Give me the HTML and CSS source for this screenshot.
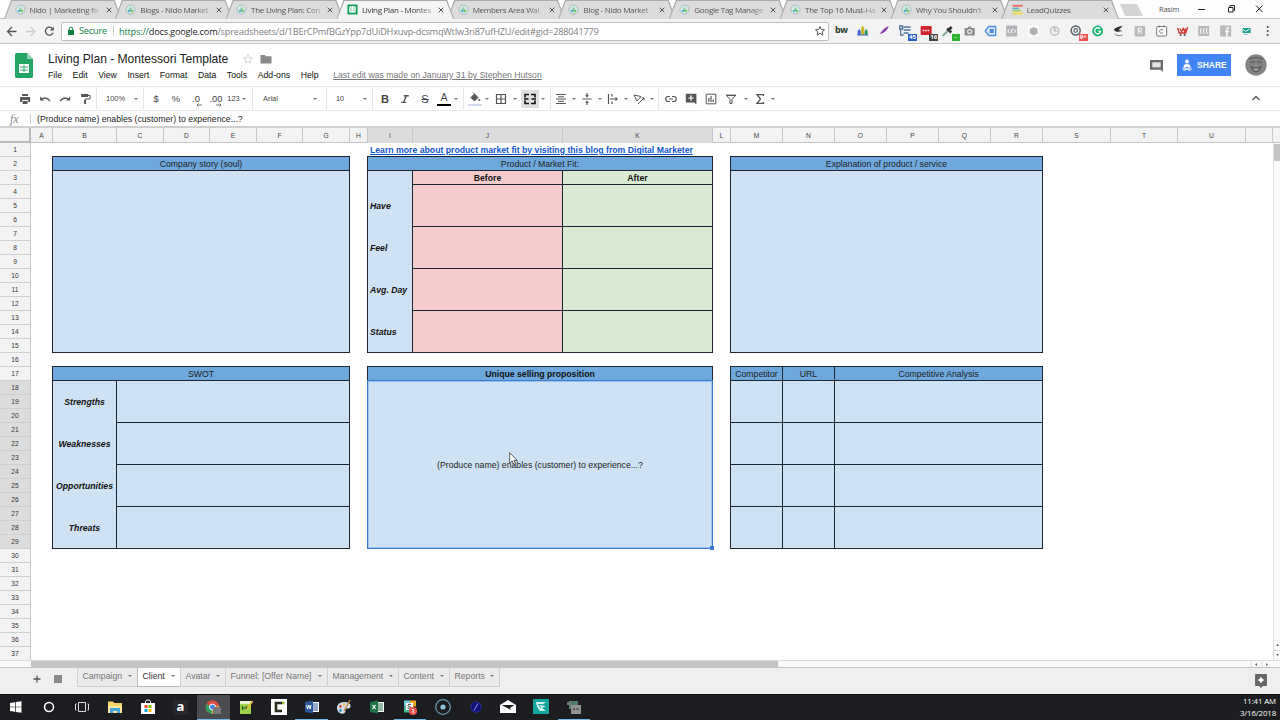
FILE: index.html
```html
<!DOCTYPE html>
<html lang="en">
<head>
    <meta charset="UTF-8">
    <title>Living Plan - Montessori Template</title>
    <link rel="stylesheet" href="styles.css">
</head>
<body>
    <!-- shared symbols -->
    <svg class="defs">
        <symbol id="nido" viewBox="0 0 12 12"><circle cx="6" cy="6" r="5" fill="#d3e8e2" stroke="#a3b8c4" stroke-width="1"/><path d="M3.500 8.500L6 3l2.500 5.500z" fill="#7fc7a0"/><circle cx="4.300" cy="7.500" r="1.300" fill="#4fb3cc"/><circle cx="7.700" cy="7.500" r="1.300" fill="#74c35f"/></symbol>
        <symbol id="x" viewBox="0 0 8 8"><path d="M1.700 1.700l4.600 4.600M6.300 1.700L1.700 6.300" stroke="#555" stroke-width="1"/></symbol>
        <symbol id="arr" viewBox="0 0 4 2"><path d="M0 0h4L2 2z" fill="#777"/></symbol>
    </svg>

    <div class="tabstrip">
        <div class="tab"><svg class="fav"><use href="#nido"/></svg><span>Nido | Marketing fo</span><svg class="close"><use href="#x"/></svg></div>
        <div class="tab"><svg class="fav"><use href="#nido"/></svg><span>Blogs - Nido Market</span><svg class="close"><use href="#x"/></svg></div>
        <div class="tab"><svg class="fav"><use href="#nido"/></svg><span>The Living Plan: Con</span><svg class="close"><use href="#x"/></svg></div>
        <div class="tab current"><svg class="fav" viewBox="0 0 12 12"><rect x=".5" y=".5" width="11" height="11" rx="1" fill="#0f9d58"/><path d="M3 3h6v6H3zM6 3v6" fill="#b7e1cd" stroke="#fff" stroke-width="1"/></svg><span>Living Plan - Montes</span><svg class="close"><use href="#x"/></svg></div>
        <div class="tab"><svg class="fav"><use href="#nido"/></svg><span>Members Area Wal</span><svg class="close"><use href="#x"/></svg></div>
        <div class="tab"><svg class="fav"><use href="#nido"/></svg><span>Blog - Nido Market</span><svg class="close"><use href="#x"/></svg></div>
        <div class="tab"><svg class="fav"><use href="#nido"/></svg><span>Google Tag Manage</span><svg class="close"><use href="#x"/></svg></div>
        <div class="tab"><svg class="fav"><use href="#nido"/></svg><span>The Top 16 Must-Ha</span><svg class="close"><use href="#x"/></svg></div>
        <div class="tab"><svg class="fav"><use href="#nido"/></svg><span>Why You Shouldn't</span><svg class="close"><use href="#x"/></svg></div>
        <div class="tab"><svg class="fav" viewBox="0 0 12 12"><path d="M.5 1h11v2H.5z" fill="#ee6a5f"/><path d="M.5 4h7v1.500h-7z" fill="#5aa7e0"/><path d="M.5 6h9v2h-9z" fill="#8ecf7f"/><path d="M.5 8.500h11v3H.5z" fill="#f1dc63"/></svg><span>LeadQuizzes</span><svg class="close"><use href="#x"/></svg></div>
        <div class="newtab"></div>
        <div class="user">Rasim</div>
        <svg class="winctl" viewBox="0 0 74 19"><g fill="none" stroke="#222" stroke-width="1"><path d="M2 9.500h7"/><path d="M32.500 7.500h4.500v4.500h-4.500zM34 7V5.500h4.500v5H37.500"/><path d="M60 5.500l6.500 6.500M66.500 5.500L60 12"/></g></svg>
    </div>

    <div class="browserbar">
        <svg class="nav" viewBox="0 0 61 24"><g fill="none" stroke-width="1.3"><path d="M16.500 12.500H8M12 8l-4.500 4.500L12 17" stroke="#555"/><path d="M26 12.500h8.500M30.500 8l4.500 4.500-4.500 4.500" stroke="#ccc"/><path d="M52.800 10a4 4 0 1 0 .3 3.800" stroke="#555"/></g><path d="M53.800 7.500v4h-4z" fill="#555"/></svg>
        <div class="url">
            <svg class="lock" viewBox="0 0 8 10"><path d="M1 4h6v5H1z" fill="#0b8043"/><path d="M2.200 4.500V3a1.800 1.800 0 0 1 3.600 0v1.500" fill="none" stroke="#0b8043"/></svg>
            <span class="secure">Secure</span>
            <span class="address"><i>https://</i><b>docs.google.com</b>/spreadsheets/d/1BErCPmfBGzYpp7dUiDHxuvp-dcsmqWtIw3ri87ufHZU/edit#gid=288041779</span>
            <svg class="star" viewBox="0 0 12 12"><path d="M6 1.500l1.300 3 3.200.3-2.400 2.100.7 3.200L6 8.400l-2.800 1.700.7-3.200-2.400-2.100 3.200-.3z" fill="none" stroke="#555"/></svg>
        </div>
        <div class="extensions">
            <span class="bw">bw</span>
            <svg viewBox="0 0 16 16"><path d="M3 12V8l1.500-2L6 8v4z" fill="#3b62c4"/><path d="M6.500 12V5L8 2.500 9.500 5v7z" fill="#c8b52a"/><path d="M10 12V8l1.500-2L13 8v4z" fill="#2d9b4f"/><path d="M2.500 12h11" stroke="#3b62c4"/></svg>
            <svg viewBox="0 0 16 16"><path d="M3 13C5 9 8 5 13 3c-1 4-4 7-9 8z" fill="#8e44ad"/></svg>
            <div class="badged"><svg viewBox="0 0 16 16"><path d="M2 3h3v3H2zM3 6v6h3M6 4h7M6 7h7M6 10h5" stroke="#56749b" stroke-width="1.300" fill="none"/></svg><em class="blue">45</em></div>
            <div class="badged"><svg viewBox="0 0 16 16"><rect x="2" y="3" width="11" height="9" rx="1" fill="#d2232a"/><path d="M4 7.500h7" stroke="#fff" stroke-width="1.500" stroke-dasharray="1.500 1"/></svg><em class="dark">16</em></div>
            <div class="badged"><svg viewBox="0 0 16 16"><path d="M3 13l5-5" stroke="#7fae9a" stroke-width="2"/><path d="M7.500 5.500l4 4M9 7l3-3" stroke="#333" stroke-width="2.600"/></svg><em class="green">-</em></div>
            <svg viewBox="0 0 16 16"><path d="M3 5h3l1-1.500h2L10 5h3v7.500H3z" fill="#888"/><circle cx="8" cy="8.600" r="2.600" fill="#eee"/><circle cx="8" cy="8.600" r="1.300" fill="#888"/></svg>
            <svg viewBox="0 0 16 16"><path d="M6 3.500h7v9H6L2.500 8z" fill="#d8e7fb" stroke="#4a8ae0" stroke-width="1.300"/><path d="M7 6h4v4H7z" fill="#4a8ae0"/></svg>
            <svg viewBox="0 0 16 16"><rect x="2.500" y="2.500" width="11" height="11" fill="#b4b4b8"/><path d="M6 6L4 8l2 2M10 6l2 2-2 2M8.700 5.500l-1.400 5" stroke="#fff" fill="none"/></svg>
            <svg viewBox="0 0 16 16"><rect x="2.500" y="2.500" width="11" height="11" fill="#fff"/><path d="M8 4l4 2v4.500l-4 2-4-2V6z" fill="#b0b0b0"/></svg>
            <svg viewBox="0 0 16 16"><circle cx="8" cy="8" r="4.200" fill="#eee" stroke="#bbb" stroke-width="1.300"/><path d="M8 4v4h2.500" stroke="#aaa" fill="none"/></svg>
            <div class="badged"><svg viewBox="0 0 16 16"><circle cx="8" cy="7.500" r="4.500" fill="none" stroke="#5b6470" stroke-width="1.500"/><circle cx="8" cy="7.500" r="1.800" fill="none" stroke="#5b6470" stroke-width="1.200"/></svg><em class="red">9+</em></div>
            <svg viewBox="0 0 16 16"><circle cx="8" cy="8" r="5.400" fill="#15b371"/><path d="M10.300 5.800a3 3 0 1 0 .7 2.400H8.500" stroke="#fff" stroke-width="1.300" fill="none"/></svg>
            <svg viewBox="0 0 16 16"><path d="M3 7c2-3 6-4 9-4L8 7l4 1-6 1z" fill="#333"/><path d="M4 11c2 2 5 2 8 1" stroke="#777" fill="none"/></svg>
            <svg viewBox="0 0 16 16"><rect x="3" y="3" width="10.500" height="10.500" rx="1" fill="#b8b8b8"/><path d="M6.500 11V5h2a1.500 1.500 0 0 1 0 3h-2M8.500 8l1.500 3" stroke="#fff" fill="none"/></svg>
            <svg viewBox="0 0 16 16"><rect x="3" y="3.500" width="10" height="9.500" rx="1" fill="#fff" stroke="#777"/><path d="M5.500 2.500v2M10.500 2.500v2M9.500 7a2 2 0 1 0 0 2.600" stroke="#777" fill="none"/></svg>
            <svg viewBox="0 0 16 16"><path d="M3 5l1.500 5H11l2-6M5 5.500l2 3 1.500-3 1.500 3 1-3" stroke="#d0342c" stroke-width="1.300" fill="none"/><circle cx="6" cy="12" r="1" fill="#555"/><circle cx="10" cy="12" r="1" fill="#555"/></svg>
            <svg viewBox="0 0 16 16"><rect x="2.500" y="3" width="11" height="10" fill="#b9b9b9"/><path d="M5.500 5q-1.500 3 0 6M8.500 5q-1.500 3 0 6M11.500 5q-1.500 3 0 6" stroke="#fff" fill="none"/></svg>
            <svg viewBox="0 0 16 16"><rect x="2.500" y="2.500" width="11" height="11" fill="#b9b9b9"/><path d="M11.500 5h-1q-1.200 0-1.200 1.200v7M7.500 8.500h4" stroke="#fff" stroke-width="1.500" fill="none"/></svg>
            <svg viewBox="0 0 16 16"><path d="M4 5h8v5H4z" fill="#1f9d8b"/><path d="M4 6l3 2.500L11 6" stroke="#dff" fill="none"/><path d="M5 11.500h4" stroke="#9bd"/></svg>
            <svg viewBox="0 0 16 16"><circle cx="8" cy="4" r="1" fill="#444"/><circle cx="8" cy="8" r="1" fill="#444"/><circle cx="8" cy="12" r="1" fill="#444"/></svg>
        </div>
    </div>

    <div class="dochead">
        <svg class="logo" viewBox="0 0 18 25"><path d="M1.500 0H12l6 6v17.500q0 1.500-1.500 1.500h-15Q0 25 0 23.500v-22Q0 0 1.500 0z" fill="#23a566"/><path d="M12 0l6 6h-6z" fill="#8ed1b1"/><path d="M4 11h10v9H4z" fill="#fff"/><path d="M5 14h8M5 17h8" stroke="#23a566" stroke-width=".9"/><path d="M9 11.800v7.400" stroke="#23a566" stroke-width=".9"/></svg>
        <div class="titles">
            <div class="title"><span>Living Plan - Montessori Template</span>
                <svg class="fstar" viewBox="0 0 12 12"><path d="M6 1.500l1.300 3 3.200.3-2.400 2.100.7 3.200L6 8.400l-2.800 1.700.7-3.200-2.400-2.100 3.200-.3z" fill="none" stroke="#ccc" stroke-width=".8"/></svg>
                <svg class="folder" viewBox="0 0 12 10"><path d="M.5 1h4L6 2.300h5.500V9.500H.5z" fill="#8a8a8a"/></svg>
            </div>
            <div class="menus"><a>File</a><a>Edit</a><a>View</a><a>Insert</a><a>Format</a><a>Data</a><a>Tools</a><a>Add-ons</a><a>Help</a><u>Last edit was made on January 31 by Stephen Hutson</u></div>
        </div>
        <div class="docright">
            <svg class="comment" viewBox="0 0 14 14"><path d="M0 1h14v13l-2.500-2.500H0z" fill="#6b6b6b"/><path d="M2.500 3.500h9v5.500h-9z" fill="#e4e4e4"/></svg>
            <div class="share"><svg viewBox="0 0 10 12"><circle cx="5" cy="2.500" r="2" fill="#fff"/><path d="M1.500 8q0-3 3.500-3t3.500 3z" fill="#fff"/><path d="M2 10h6" stroke="#fff" stroke-width="1"/><rect x=".8" y="8.600" width="3.600" height="2.600" rx="1.300" fill="none" stroke="#fff" stroke-width=".8"/><rect x="5.600" y="8.600" width="3.600" height="2.600" rx="1.300" fill="none" stroke="#fff" stroke-width=".8"/></svg>SHARE</div>
            <svg class="avatar" viewBox="0 0 22 22"><circle cx="11" cy="11" r="10.700" fill="#858585"/><path d="M5 8.500q2.500-1.500 5 0M12 8.500q2.500-1.500 5 0M6 12.500l4 1.500h2l4-1.500-2 4q-3 2.500-6 0zM4 5.500q7-4 14 0" stroke="#555" fill="none" stroke-width="1.100"/><path d="M9 15.500q2 1 4 0" stroke="#bbb" fill="none"/></svg>
        </div>
    </div>

    <div class="toolbar">
        <div class="grp g1">
            <svg viewBox="0 0 12 12"><path d="M3 1h6v2H3zM1 4h10v5H9V7H3v2H1zM3.500 8h5v3h-5z" fill="#555"/></svg>
            <svg viewBox="0 0 12 12"><path d="M1 3.500v4h4z" fill="#555"/><path d="M2.500 6.500q4-3.500 8.500 1.500" fill="none" stroke="#555" stroke-width="1.300"/></svg>
            <svg viewBox="0 0 12 12"><path d="M11 3.500v4H7z" fill="#555"/><path d="M9.500 6.500Q5.500 3 1 8" fill="none" stroke="#555" stroke-width="1.300"/></svg>
            <svg viewBox="0 0 12 12"><path d="M2 1h7v3H2z" fill="#555"/><path d="M9 2.500h2V6H6v2" fill="none" stroke="#555"/><path d="M5 7h2v4H5z" fill="#555"/></svg>
        </div>
        <div class="grp g2"><span>100%</span><svg class="arr"><use href="#arr"/></svg></div>
        <div class="grp g3"><span class="big">$</span><span class="big">%</span><span class="big dec">.0<svg viewBox="0 0 6 4"><path d="M6 2H1M2.500.5L1 2l1.500 1.500" stroke="#555" stroke-width=".8" fill="none"/></svg></span><span class="big dec">.00<svg viewBox="0 0 6 4"><path d="M0 2h5M3.500.5L5 2 3.500 3.500" stroke="#555" stroke-width=".8" fill="none"/></svg></span><span class="num">123</span><svg class="arr"><use href="#arr"/></svg></div>
        <div class="grp g4"><span>Arial</span><svg class="arr"><use href="#arr"/></svg></div>
        <div class="grp g5"><span>10</span><svg class="arr"><use href="#arr"/></svg></div>
        <div class="grp g6"><span class="fmt"><b>B</b></span><svg class="i20" viewBox="0 0 12 12"><path d="M4.500 2h6M1.500 10h6M7.500 2l-3 8" fill="none" stroke="#555" stroke-width="1.700"/></svg><span class="fmt strike">S</span><span class="fmt fcolor">A</span><svg class="arr"><use href="#arr"/></svg></div>
        <div class="grp g7">
            <svg class="i18" viewBox="0 0 14 14"><path d="M3 5.500L6.500 2l3.500 3.500L6.500 9zM5 .5l2 2" fill="#555" stroke="#555"/><circle cx="11.300" cy="8" r="1.100" fill="#555"/><path d="M0 12h14v2H0z" fill="#d3dcef"/></svg><svg class="arr"><use href="#arr"/></svg>
            <svg class="i22" viewBox="0 0 12 12"><path d="M1.500 1.500h9v9h-9zM6 1.500v9M1.500 6h9" fill="none" stroke="#555" stroke-width="1.200"/></svg><svg class="arr"><use href="#arr"/></svg>
            <div class="merge"><svg viewBox="0 0 12 12"><path d="M5 1.500H1v3M7 1.500h4v3M5 10.500H1v-3M7 10.500h4v-3M0 6h4.500M12 6H7.500" fill="none" stroke="#111" stroke-width="1.600"/></svg></div><svg class="arr"><use href="#arr"/></svg>
        </div>
        <div class="grp g8">
            <svg class="i20" viewBox="0 0 12 12"><path d="M1 1.500h10M3 3.800h6M1 6h10M3 8.300h6M1 10.500h10" stroke="#555"/></svg><svg class="arr"><use href="#arr"/></svg>
            <svg class="i20" viewBox="0 0 12 12"><path d="M1.500 6h9M6 0v3M6 12V9" stroke="#555" stroke-width="1.200"/><path d="M4 2.300h4L6 4.500zM4 9.700h4L6 7.500z" fill="#555"/></svg><svg class="arr"><use href="#arr"/></svg>
            <svg class="i20" viewBox="0 0 12 12"><path d="M1.500 1v10M5 1v2.500M5 8.500V11M3 6h6" stroke="#555" stroke-width="1.200"/><path d="M8.500 3.800L11 6 8.500 8.200z" fill="#555"/></svg><svg class="arr"><use href="#arr"/></svg>
            <svg class="i20" viewBox="0 0 12 12"><path d="M1 2l7 1.500L4 8zM5 11l6-6M8.500 5H11v2.500" fill="none" stroke="#555"/></svg><svg class="arr"><use href="#arr"/></svg>
        </div>
        <div class="grp g9">
            <svg class="i20" viewBox="0 0 12 12"><path d="M5 3.500H3.200a2.500 2.500 0 0 0 0 5H5M7 3.500h1.800a2.500 2.500 0 0 1 0 5H7M4 6h4" fill="none" stroke="#555" stroke-width="1.200"/></svg>
            <svg class="i20" viewBox="0 0 12 12"><path d="M.8.800h10.600v10.700L9 9.500H.8z" fill="#555"/><path d="M6 2.300v5.400M3.300 5h5.400" stroke="#fff" stroke-width="1.200"/></svg>
            <svg class="i20" viewBox="0 0 12 12"><path d="M1.200 1.200h9.600v9.600H1.200z" fill="none" stroke="#555"/><path d="M3.800 5v4M6 3v6M8.200 6.500V9" stroke="#555" stroke-width="1.200"/></svg>
            <svg class="i20" viewBox="0 0 12 12"><path d="M1.500 2.500h9L7 6.500v4H5v-4z" fill="none" stroke="#555"/><path d="M1 2.300h10" stroke="#555" stroke-width="1.400"/></svg><svg class="arr wide"><use href="#arr"/></svg>
            <svg class="i20" viewBox="0 0 12 12"><path d="M9.500 3V1.700H3L6.500 6 3 10.300h6.500V9" fill="none" stroke="#555" stroke-width="1.300"/></svg><svg class="arr"><use href="#arr"/></svg>
        </div>
        <svg class="collapse" viewBox="0 0 10 8"><path d="M1.500 6L5 2.500 8.500 6" fill="none" stroke="#555" stroke-width="1.300"/></svg>
    </div>

    <div class="formula"><i>fx</i><span>(Produce name) enables (customer) to experience...?</span></div>

    <div class="main">
        <div class="colheads" id="colheads"><div class="corner"></div></div>
        <div class="body">
            <div class="rowheads" id="rowheads"></div>
            <div class="sheet">
                <a class="cell link">Learn more about product market fit by visiting this blog from Digital Marketer</a>

                <div class="cell head story-h">Company story (soul)</div>
                <div class="cell story"></div>

                <div class="cell head fit-h">Product / Market Fit:</div>
                <div class="cell fit-labels labels left"><span></span><b>Have</b><b>Feel</b><b>Avg. Day</b><b>Status</b></div>
                <div class="cell before pink strong">Before</div>
                <div class="cell after mint strong">After</div>
                <div class="cell before pink have"></div><div class="cell after mint have"></div>
                <div class="cell before pink feel"></div><div class="cell after mint feel"></div>
                <div class="cell before pink day"></div><div class="cell after mint day"></div>
                <div class="cell before pink status"></div><div class="cell after mint status"></div>

                <div class="cell head expl-h">Explanation of product / service</div>
                <div class="cell expl"></div>

                <div class="cell head swot-h">SWOT</div>
                <div class="cell swot-labels labels"><b>Strengths</b><b>Weaknesses</b><b>Opportunities</b><b>Threats</b></div>
                <div class="cell swot r1"></div><div class="cell swot r2"></div><div class="cell swot r3"></div><div class="cell swot r4"></div>

                <div class="cell head usp-h strong">Unique selling proposition</div>
                <div class="cell usp">(Produce name) enables (customer) to experience...?<span class="handle"></span></div>

                <div class="cell head comp">Competitor</div><div class="cell head site">URL</div><div class="cell head analysis">Competitive Analysis</div>
                <div class="cell comp r1"></div><div class="cell site r1"></div><div class="cell analysis r1"></div>
                <div class="cell comp r2"></div><div class="cell site r2"></div><div class="cell analysis r2"></div>
                <div class="cell comp r3"></div><div class="cell site r3"></div><div class="cell analysis r3"></div>
                <div class="cell comp r4"></div><div class="cell site r4"></div><div class="cell analysis r4"></div>
            </div>
            <div class="vscroll"><div class="thumb"></div><svg viewBox="0 0 7 20"><path d="M0 0h7M0 10.500h7" stroke="#ddd"/><path d="M2 6h3L3.500 4zM2 14h3l-1.500 2z" fill="#666"/></svg></div>
        </div>
        <div class="hscroll"><div class="thumb"></div><svg viewBox="0 0 24 7"><path d="M1 0v7M12 0v7" stroke="#ddd"/><path d="M7 2v3L5 3.500zM16 2v3l2-1.500z" fill="#666"/></svg></div>
    </div>

    <div class="sheettabs">
        <svg class="add" viewBox="0 0 8 8"><path d="M4 .5v7M.5 4h7" stroke="#555" stroke-width="1.300"/></svg>
        <span class="all"></span>
        <div class="stab t1">Campaign<svg class="arr"><use href="#arr"/></svg></div>
        <div class="stab t2 on">Client<svg class="arr"><use href="#arr"/></svg></div>
        <div class="stab t3">Avatar<svg class="arr"><use href="#arr"/></svg></div>
        <div class="stab t4">Funnel: [Offer Name]<svg class="arr"><use href="#arr"/></svg></div>
        <div class="stab t5">Management<svg class="arr"><use href="#arr"/></svg></div>
        <div class="stab t6">Content<svg class="arr"><use href="#arr"/></svg></div>
        <div class="stab t7">Reports<svg class="arr"><use href="#arr"/></svg></div>
        <svg class="explore" viewBox="0 0 12 14"><path d="M1 0h10q1 0 1 1v10q0 1-1 1H8l-2 2-2-2H1q-1 0-1-1V1q0-1 1-1z" fill="#666"/><path d="M6 2.500L7.200 4.800 9.500 6 7.200 7.200 6 9.500 4.800 7.200 2.500 6l2.300-1.200z" fill="#fff"/></svg>
    </div>

    <div class="taskbar">
        <div class="app"><svg viewBox="0 0 16 16"><path d="M2 4l5-.8v4.500H2zM7.700 3.100L13.500 2.300v5.400H7.700zM2 8.300h5v4.500L2 12zM7.700 8.300h5.800v5.400l-5.800-.8z" fill="#fff"/></svg></div>
        <div class="app"><svg viewBox="0 0 16 16"><circle cx="8" cy="8" r="4.500" fill="none" stroke="#fff" stroke-width="1.500"/></svg></div>
        <div class="app"><svg viewBox="0 0 16 16"><path d="M4.500 3.500h7v9h-7zM2.500 5h-1v6h1M13.500 5h1v6h-1" fill="none" stroke="#ddd"/></svg></div>
        <div class="app"><svg viewBox="0 0 16 16"><path d="M1 2.500h5l1.500 1.500H15v10H1z" fill="#f5d56b"/><path d="M1 7h14v7H1z" fill="#fbe596"/><path d="M3 9h10v5h-3v-2H6v2H3z" fill="#3fa5dc"/></svg></div>
        <div class="app"><svg viewBox="0 0 16 16"><path d="M5.500 4V2.500q0-1.500 2.500-1.500t2.500 1.500V4" fill="none" stroke="#fff"/><path d="M1 4h14v11H1z" fill="#fff"/><path d="M4.500 6h3v3h-3z" fill="#f25022"/><path d="M8.500 6h3v3h-3z" fill="#7fba00"/><path d="M4.500 10h3v3h-3z" fill="#00a4ef"/><path d="M8.500 10h3v3h-3z" fill="#ffb900"/></svg></div>
        <div class="app"><span class="amazon">a</span></div>
        <div class="app open lit"><svg viewBox="0 0 16 16"><circle cx="7.500" cy="8" r="6.800" fill="#dd4b3e"/><path d="M7.500 8L1.200 5.200A6.800 6.800 0 0 0 7 14.800z" fill="#2aa55a"/><path d="M7.500 8l6.600-1A6.800 6.800 0 0 1 7 14.800z" fill="#f5c32c"/><circle cx="7.500" cy="8" r="3" fill="#4285f4" stroke="#fff"/><rect x="8" y="8" width="8" height="7" fill="#777"/></svg></div>
        <div class="app"><svg viewBox="0 0 16 16"><path d="M2 2h11v13H2z" fill="#9ad34a"/><path d="M2 2h11v3H2z" fill="#e9f3d8"/><path d="M4.500 7v4M4.500 9h4M8.500 7v3" stroke="#1f5a17" stroke-width="1.200"/><path d="M9 10l5.500-8" stroke="#f0b93c" stroke-width="1.800"/></svg></div>
        <div class="app"><svg viewBox="0 0 16 16"><path d="M0 0h16v16H0z" fill="#fff"/><path d="M11 4H5v8h6" fill="none" stroke="#2a2d1c" stroke-width="2.600"/><path d="M11 2.700h2.500v2.600H11z" fill="#8ab92d"/></svg></div>
        <div class="app open"><svg viewBox="0 0 16 16"><path d="M8 3h7v10H8z" fill="#fff"/><path d="M9 5h5M9 7h5M9 9h5M9 11h5" stroke="#2b579a"/><path d="M1 3l8-1.500v13L1 13z" fill="#2b579a"/><path d="M2.500 6l1 4 1.300-4 1.300 4 1-4" fill="none" stroke="#fff"/></svg></div>
        <div class="app"><svg viewBox="0 0 16 16"><path d="M1 9.500Q1 3 8 3t6.500 4.500q0 2-3 2t-2 3q-1 3-4.500 2T1 9.500z" fill="#cfe3ef"/><circle cx="4.500" cy="7.500" r="1.400" fill="#d6483c"/><circle cx="8" cy="5.500" r="1.300" fill="#e8b93a"/><circle cx="4.500" cy="11.500" r="1.400" fill="#3b8cc8"/><path d="M8 12l6-11" stroke="#c9873d" stroke-width="1.500"/></svg></div>
        <div class="app"><svg viewBox="0 0 16 16"><path d="M8 3h7v10H8z" fill="#fff"/><path d="M9 5h5M9 7h5M9 9h5M9 11h5" stroke="#217346"/><path d="M1 3l8-1.500v13L1 13z" fill="#217346"/><path d="M3.500 6l3 4M6.500 6l-3 4" fill="none" stroke="#fff" stroke-width="1.200"/></svg></div>
        <div class="app open"><svg viewBox="0 0 16 16"><path d="M2 1.500h6v6H2z" fill="#6ecadc"/><path d="M8 1.500h6v6H8z" fill="#e9a820"/><path d="M2 7.500h6v6H2z" fill="#3eb991"/><path d="M4 4h7v7H4z" fill="#fff"/><path d="M9 5.500q-3-1-3 .7T8.500 8q0 2-3 1" fill="none" stroke="#444"/><circle cx="11" cy="12" r="4" fill="#ee5653"/><path d="M10 10.800l1.200-.8v4" stroke="#fff" fill="none"/></svg></div>
        <div class="app"><svg viewBox="0 0 16 16"><circle cx="8" cy="8" r="7.300" fill="none" stroke="#6b9fb8" stroke-width="1.200"/><circle cx="8" cy="8" r="2.600" fill="#8fc3dc"/></svg></div>
        <div class="app"><svg viewBox="0 0 16 16"><circle cx="8" cy="8" r="5.200" fill="#101078" stroke="#2b2b9e"/><path d="M10 4.500L6 11.500" stroke="#8ea0e0"/></svg></div>
        <div class="app"><svg viewBox="0 0 16 16"><path d="M0 6l8-5 8 5v8H0z" fill="#fff"/><path d="M1.500 6h13L10 9l1 2-3-1.500z" fill="#1b1d20"/></svg></div>
        <div class="app"><svg viewBox="0 0 16 16"><path d="M0 0h16v15H0z" fill="#12a5a0"/><path d="M3 3h10L8 6.500l5 .5-4 2 4 3H7L4 8z" fill="#d8f3f1"/><path d="M9 5.500H5.500L8 9" stroke="#12a5a0" fill="none"/></svg></div>
        <div class="app open"><svg viewBox="0 0 16 16"><path d="M3 2h9v8H3z" fill="#4d7d6a"/><path d="M5 6h10v9H5z" fill="#929292"/><path d="M1 3h4v3H1z" fill="#777"/><path d="M7 9h2v2H7zM10.500 9h2v2h-2z" fill="#555"/></svg></div>
        <div class="clock">11:41 AM<br>3/16/2018</div>
    </div>

    <svg class="pointer" viewBox="0 0 9 14"><path d="M.7.700v10.500l2.500-2.200 1.600 3.700 1.700-.8-1.600-3.500h3.200z" fill="#fff" stroke="#333" stroke-width=".8"/></svg>

    <script>
        let colheads = document.getElementById("colheads");
        "ABCDEFGHIJKLMNOPQRSTU".split("").forEach(letter => {
            let picked = "IJK".includes(letter) ? ' class="sel"' : '';
            colheads.innerHTML += `<div${picked}>${letter}</div>`;
        });
        colheads.innerHTML += "<div></div>";

        let rows = "";
        for (let i = 1; i <= 37; i++) {
            rows += `<div${i >= 18 && i <= 29 ? ' class="sel"' : ''}>${i}</div>`;
        }
        document.getElementById("rowheads").innerHTML = rows;
    </script>
</body>
</html>
```
FILE: styles.css
```css
* {
    box-sizing: border-box;
}
body {
    margin: 0;
    width: 1280px;
    height: 720px;
    overflow: hidden;
    display: flex;
    flex-direction: column;
    background: #fff;
    font-family: "Liberation Sans", Arial, sans-serif;
    color: #222;
}
svg {
    flex: none;
    display: block;
}
.defs {
    position: absolute;
    width: 0;
    height: 0;
}

/* browser tabs */
.tabstrip {
    height: 19px;
    flex: none;
    display: flex;
    padding-left: 4px;
    background: #fdfdfd;
    border-bottom: 1px solid #c4c4c4;
    font-family: "Open Sans", sans-serif;
}
.tab {
    position: relative;
    width: 110.8px;
    height: 19px;
    flex: none;
    display: flex;
    align-items: center;
    padding-left: 10.5px;
    font-size: 8px;
    color: #555;
}
.tab::before,
.tab::after {
    content: "";
    position: absolute;
    z-index: 0;
    left: 0;
    right: -7px;
    top: 0;
    bottom: 0;
    background: #a9a9a9;
    clip-path: polygon(0 100%, 7px 0, calc(100% - 7px) 0, 100% 100%);
}
.tab::after {
    left: 1px;
    right: -6px;
    top: 1px;
    background: #dcdcdc;
}
.tab.current {
    z-index: 2;
}
.tab.current::after {
    background: #f4f4f4;
}
.tab > * {
    position: relative;
    z-index: 1;
}
.fav {
    width: 11px;
    height: 11px;
}
.tab span {
    width: 74px;
    margin-left: 4px;
    white-space: nowrap;
    letter-spacing: -0.27px;
    -webkit-mask-image: linear-gradient(to right, #000 75%, rgba(0, 0, 0, 0.3) 95%);
}
.tab.current span {
    color: #333;
}
.close {
    width: 8px;
    height: 8px;
    margin-left: 1px;
}
.newtab {
    width: 23px;
    height: 12px;
    flex: none;
    margin: 4px 0 0 8px;
    background: #d4d4d4;
    clip-path: polygon(0 0, 75% 0, 100% 100%, 22% 100%);
}
.user {
    width: 24px;
    margin: 3px 0 0 16px;
    font-size: 7.5px;
    line-height: 12px;
    letter-spacing: -0.2px;
    color: #555;
}
.winctl {
    width: 74px;
    height: 19px;
    margin-left: 13px;
}

/* address bar */
.browserbar {
    height: 25px;
    flex: none;
    display: flex;
    align-items: center;
    background: #f3f3f3;
    border-bottom: 1px solid #c8c8c8;
    font-family: "Open Sans", sans-serif;
}
.nav {
    width: 61px;
    height: 24px;
}
.url {
    width: 768px;
    height: 19px;
    flex: none;
    display: flex;
    align-items: center;
    background: #fff;
    border: 1px solid #bdbdbd;
    border-radius: 2px;
    font-size: 9.2px;
    color: #808080;
}
.lock {
    width: 8px;
    height: 10px;
    margin-left: 5px;
}
.secure {
    width: 35px;
    margin-left: 4px;
    line-height: 10px;
    letter-spacing: -0.2px;
    color: #0b8043;
    border-right: 1px solid #ccc;
}
.address {
    width: 691px;
    margin-left: 5px;
    white-space: nowrap;
    letter-spacing: -0.2px;
}
.address i {
    font-style: normal;
    color: #0b8043;
}
.address b {
    font-weight: normal;
    color: #222;
}
.star {
    width: 12px;
    height: 12px;
    margin-left: 4px;
}
.extensions {
    flex: 1;
    display: flex;
    padding-left: 1.5px;
}
.extensions > * {
    width: 21.35px;
    height: 16px;
    flex: none;
}
.bw {
    font: bold 9px/14px "Open Sans", sans-serif;
    letter-spacing: -0.6px;
    text-align: center;
    color: #1d3b1d;
}
.badged {
    position: relative;
}
.badged svg {
    width: 21.35px;
    height: 16px;
}
.badged em {
    position: absolute;
    right: -1px;
    bottom: -2px;
    min-width: 8px;
    height: 7px;
    padding: 0 1px;
    font: bold 6px/7px "Open Sans", sans-serif;
    text-align: center;
    color: #fff;
}
.blue { background: #2a5fc4; }
.dark { background: #444; }
.green { background: #2bb32b; }
.red { background: #ee5353; }

/* document header */
.dochead {
    height: 43px;
    flex: none;
    display: flex;
    border-bottom: 1px solid #e9e9e9;
}
.logo {
    width: 18px;
    height: 25px;
    margin: 9px 0 0 15px;
}
.titles {
    margin-left: 15px;
    width: 1102px;
}
.title {
    display: flex;
    align-items: center;
    height: 15px;
    margin-top: 7px;
    font-size: 12.1px;
    color: #222;
}
.title span {
    width: 180px;
    white-space: nowrap;
    letter-spacing: -0.03px;
}
.fstar {
    width: 12px;
    height: 12px;
    margin-left: 14px;
}
.folder {
    width: 12px;
    height: 10px;
    margin-left: 6px;
}
.menus {
    display: flex;
    height: 14px;
    margin-top: 2px;
    font-size: 8.7px;
    line-height: 14px;
    color: #111;
}
.menus a {
    margin-right: 10.6px;
}
.menus u {
    margin-left: 4px;
    color: #777;
    white-space: nowrap;
}
.docright {
    display: flex;
    align-items: center;
}
.comment {
    width: 13px;
    height: 13px;
}
.share {
    width: 54px;
    height: 22px;
    margin-left: 14px;
    display: flex;
    align-items: center;
    background: #4285f4;
    color: #fff;
    font-weight: bold;
    font-size: 8.5px;
}
.share svg {
    width: 10px;
    height: 12px;
    margin: 0 5px;
}
.avatar {
    width: 22px;
    height: 22px;
    margin-left: 14px;
}

/* toolbar */
.toolbar {
    height: 24px;
    flex: none;
    display: flex;
    border-bottom: 1px solid #e9e9e9;
    font-size: 7.4px;
    color: #444;
}
.grp {
    display: flex;
    align-items: center;
    flex: none;
    border-right: 1px solid #e6e6e6;
}
.grp > span {
    text-align: center;
}
.arr {
    width: 4px;
    height: 2px;
    margin: 0 .5px;
}
.g1 { width: 97px; padding-left: 14.5px; }
.g1 svg { width: 20.2px; height: 12px; }
.g2 { width: 47px; }
.g2 span { width: 37px; }
.g2 .arr { margin-left: 0; }
.g3 { width: 109px; padding-left: 2px; }
.g3 .big { width: 20px; font-size: 9.3px; }
.g3 .dec { position: relative; }
.dec svg {
    position: absolute;
    right: 4px;
    bottom: -3px;
    width: 6px;
    height: 4px;
}
.g3 .num { width: 15px; }
.g4 { width: 74px; padding-left: 10px; }
.g4 span { width: 49.5px; text-align: left; }
.g5 { width: 46px; padding-left: 9px; }
.g5 span { width: 26.5px; text-align: left; }
.g6 { width: 91px; padding-left: 2px; }
.g6 .i20 { height: 10px; }
.fmt { width: 20px; font-size: 11px; color: #444; }
.strike { text-decoration: line-through; }
.g6 .fcolor {
    width: 14px;
    height: 14px;
    margin: 1px 2px 0;
    line-height: 11px;
    font-size: 10px;
    border-bottom: 2px solid #000;
}
.g7 { width: 87px; padding-left: 2px; }
.i18 { width: 18px; height: 14px; }
.i22 { width: 22px; height: 12px; margin-left: 1px; }
.i20 { width: 20px; height: 12px; }
.merge {
    width: 18px;
    height: 18px;
    margin: 0 3px 0 4px;
    padding: 3px;
    background: #e0e0e0;
}
.g7 .merge + .arr { margin-left: -1px; }
.merge svg { width: 12px; height: 12px; }
.g8 { width: 108px; }
.g8 .arr { margin-right: 1.5px; }
.g9 { padding-left: 2px; border: 0; }
.arr.wide { margin: 0 2.5px; }
.collapse {
    width: 10px;
    height: 8px;
    margin: 7px 19px 0 auto;
}

/* formula bar */
.formula {
    height: 15px;
    flex: none;
    display: flex;
    align-items: center;
    font-size: 8.7px;
}
.formula i {
    width: 31px;
    padding-left: 10px;
    font: italic 12px/10px "Liberation Serif", serif;
    color: #888;
    border-right: 1px solid #ccc;
}
.formula span {
    margin-left: 6px;
}

/* grid */
.main {
    height: 541px;
    flex: none;
    display: flex;
    flex-direction: column;
}
.colheads {
    height: 17px;
    flex: none;
    display: grid;
    grid-template-columns: 31px 22px 64px repeat(5, 46.6px) 18px 45px 150px 150px 18px repeat(6, 52px) 68px 67px 68px 27px;
    border-top: 2px solid #cfcfcf;
    border-bottom: 1px solid #c4c4c4;
    background: #f3f3f3;
    font-size: 6.7px;
    line-height: 15px;
    text-align: center;
    color: #444;
}
.colheads div {
    border-right: 1px solid #c8c8c8;
}
.colheads .corner {
    border-right: 2px solid #bbb;
    border-bottom: 2px solid #bbb;
}
.colheads .sel,
.rowheads .sel {
    background: #dcdcdc;
}
.body {
    flex: 1;
    display: flex;
    overflow: hidden;
}
.rowheads {
    width: 31px;
    height: 518px;
    flex: none;
    background: #f3f3f3;
    border-right: 1px solid #c8c8c8;
    font-size: 6.7px;
    line-height: 14px;
    text-align: center;
    color: #333;
}
.rowheads div {
    height: 14px;
    border-bottom: 1px solid #cfcfcf;
}
.sheet {
    width: 1242px;
    flex: none;
    display: grid;
    grid-template-columns: 22px 64px repeat(5, 46.6px) 18px 45px 150px 150px 18px repeat(6, 52px) 68px 67px 68px 27px;
    grid-template-rows: repeat(37, 14px);
    font-size: 8.7px;
}
.cell {
    display: flex;
    align-items: center;
    justify-content: center;
    margin: -1px 0 0 -1px;
    border: 1px solid #1c2733;
    background: #cfe2f3;
    white-space: nowrap;
}
.head { background: #6fa8dc; }
.pink { background: #f4cccc; }
.mint { background: #d9ead3; }
.strong { font-weight: bold; color: #111; }
.link {
    grid-area: 1 / 9 / 2 / 12;
    justify-content: flex-start;
    padding-left: 2px;
    border: 0;
    margin: 0;
    background: none;
    font-weight: bold;
    text-decoration: underline;
    color: #1155cc;
}
.labels {
    display: grid;
    grid-template-rows: repeat(4, 42px);
    align-items: center;
    justify-content: stretch;
    text-align: center;
    font-style: italic;
    color: #111;
}
.labels.left {
    grid-template-rows: 14px repeat(4, 42px);
    text-align: left;
    padding-left: 2px;
}
.story-h { grid-area: 2 / 2 / 3 / 8; }
.story { grid-area: 3 / 2 / 16 / 8; }
.fit-h { grid-area: 2 / 9 / 3 / 12; }
.fit-labels { grid-area: 3 / 9 / 16 / 10; }
.before { grid-column: 10; grid-row: 3; }
.after { grid-column: 11; grid-row: 3; }
.have { grid-row: 4 / 7; }
.feel { grid-row: 7 / 10; }
.day { grid-row: 10 / 13; }
.status { grid-row: 13 / 16; }
.expl-h { grid-area: 2 / 13 / 3 / 19; }
.expl { grid-area: 3 / 13 / 16 / 19; }
.swot-h { grid-area: 17 / 2 / 18 / 8; }
.swot-labels { grid-area: 18 / 2 / 30 / 3; }
.swot { grid-column: 3 / 8; }
.comp { grid-column: 13; grid-row: 17; }
.site { grid-column: 14; grid-row: 17; }
.analysis { grid-column: 15 / 19; grid-row: 17; }
.r1 { grid-row: 18 / 21; }
.r2 { grid-row: 21 / 24; }
.r3 { grid-row: 24 / 27; }
.r4 { grid-row: 27 / 30; }
.usp-h { grid-area: 17 / 9 / 18 / 12; }
.usp {
    position: relative;
    grid-area: 18 / 9 / 30 / 12;
    border-color: #3c7bd0;
    outline: 1px solid rgba(66, 133, 244, 0.35);
    outline-offset: -2px;
}
.handle {
    position: absolute;
    right: -2px;
    bottom: -2px;
    width: 4px;
    height: 4px;
    background: #3c7bd0;
}
.vscroll {
    width: 7px;
    display: flex;
    flex-direction: column;
    justify-content: space-between;
    border-left: 1px solid #ddd;
    background: #fafafa;
}
.vscroll .thumb {
    height: 17px;
    margin-top: 1px;
    background: #c4c4c4;
}
.vscroll svg {
    width: 7px;
    height: 20px;
}
.hscroll {
    height: 7px;
    flex: none;
    display: flex;
    justify-content: space-between;
    padding: 0 6px 0 31px;
    background: #fafafa;
    border-top: 1px solid #ddd;
}
.hscroll .thumb {
    width: 747px;
    background: #c4c4c4;
}
.hscroll svg {
    width: 24px;
    height: 7px;
}

/* sheet tabs */
.sheettabs {
    height: 27px;
    flex: none;
    display: flex;
    background: #efefef;
    border-top: 1px solid #c4c4c4;
}
.add {
    width: 8px;
    height: 8px;
    margin: 7px 0 0 33px;
}
.all {
    width: 8px;
    height: 8px;
    margin: 7px 15px 0 13px;
    border: 1px solid #888;
    background: #8a8a8a;
}
.stab {
    height: 19px;
    display: flex;
    align-items: center;
    padding-left: 4.5px;
    padding-bottom: 2px;
    border: 1px solid #d0d0d0;
    border-width: 0 0 1px 1px;
    background: #ebebeb;
    font-size: 8.7px;
    color: #777;
    white-space: nowrap;
}
.stab .arr {
    margin: 0 5px 0 auto;
}
.stab.on {
    background: #fff;
    color: #333;
    border-color: #bbb;
}
.t1 { width: 60px; }
.t2 { width: 43px; }
.t3 { width: 45px; }
.t4 { width: 102px; }
.t5 { width: 71px; }
.t6 { width: 51px; }
.t7 { width: 51px; border-right-width: 1px; }
.explore {
    width: 12px;
    height: 14px;
    margin: 6px 13px 0 auto;
}

/* windows taskbar */
.taskbar {
    height: 27px;
    flex: none;
    display: flex;
    background: #1b1d20;
    border-top: 1px solid #0c0d10;
}
.app {
    width: 32.8px;
    flex: none;
    display: flex;
    align-items: center;
    justify-content: center;
    border-bottom: 2px solid transparent;
}
.app svg {
    width: 16px;
    height: 16px;
}
.app.lit {
    background: #4a4c50;
}
.app.open {
    border-bottom-color: #76b9ed;
}
.amazon {
    width: 15px;
    height: 15px;
    background: #26282e;
    color: #fff;
    font: bold 13px/13px "Open Sans", sans-serif;
    text-align: center;
}
.clock {
    margin: 0 4px 0 auto;
    font: 7.8px/12px "Open Sans", sans-serif;
    letter-spacing: -0.1px;
    text-align: right;
    color: #fff;
}

.pointer {
    position: absolute;
    left: 509px;
    top: 452px;
    width: 9px;
    height: 14px;
}
```
